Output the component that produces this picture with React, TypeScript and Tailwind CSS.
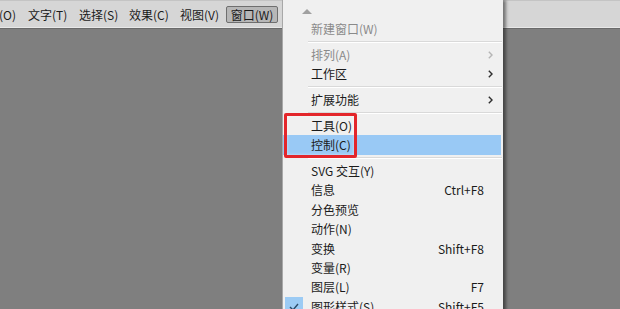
import React from "react";

type Item =
  | { type: "sep" }
  | {
      type: "item";
      label: string;
      disabled?: boolean;
      sub?: boolean;
      shortcut?: string;
      active?: boolean;
      checked?: boolean;
    };

const items: Item[] = [
  { type: "item", label: "新建窗口(W)", disabled: true },
  { type: "sep" },
  { type: "item", label: "排列(A)", disabled: true, sub: true },
  { type: "item", label: "工作区", sub: true },
  { type: "sep" },
  { type: "item", label: "扩展功能", sub: true },
  { type: "sep" },
  { type: "item", label: "工具(O)" },
  { type: "item", label: "控制(C)", active: true },
  { type: "sep" },
  { type: "item", label: "SVG 交互(Y)" },
  { type: "item", label: "信息", shortcut: "Ctrl+F8" },
  { type: "item", label: "分色预览" },
  { type: "item", label: "动作(N)" },
  { type: "item", label: "变换", shortcut: "Shift+F8" },
  { type: "item", label: "变量(R)" },
  { type: "item", label: "图层(L)", shortcut: "F7" },
  { type: "item", label: "图形样式(S)", shortcut: "Shift+F5", checked: true },
];

function Chevron({ disabled }: { disabled?: boolean }) {
  return (
    <svg width="5" height="8" viewBox="0 0 5 8" className="absolute right-[8px] top-1/2 -translate-y-1/2">
      <path d="M0.8 0.8 L4 4 L0.8 7.2" fill="none" stroke={disabled ? "#b5b5b5" : "#2e2e2e"} strokeWidth="1.4" />
    </svg>
  );
}

export default function App() {
  return (
    <div className="relative w-[620px] h-[309px] overflow-hidden bg-[#7f7f7f] font-['Noto_Sans_CJK_SC','Noto_Sans',sans-serif] text-[12px] text-[#1b1b1b]">
      {/* menu bar */}
      <div className="h-[28px] bg-[#d6d6d6] border-t border-[#c4c4c4] border-b border-b-[#e8e8e8] flex items-center pt-[1px] leading-none">
        <span className="w-[29px] -ml-[1px] shrink-0">(O)</span>
        <span className="w-[51px] shrink-0">文字(T)</span>
        <span className="w-[50px] shrink-0">选择(S)</span>
        <span className="w-[51px] shrink-0">效果(C)</span>
        <span className="w-[46px] shrink-0">视图(V)</span>
        <span className="w-[52px] h-[17px] shrink-0 flex items-center justify-center bg-[#b7b7b7] border border-[#6f6f6f] rounded-[2px]">
          窗口(W)
        </span>
      </div>
      <div className="h-[1px] bg-[#6a6a6a]" />

      {/* dropdown menu */}
      <div className="absolute left-[282px] top-0 w-[221px] h-[330px] bg-[#f0f0f0] border-l border-[#a8a8a8] shadow-[3px_0_3px_rgba(0,0,0,0.45)]">
        <div className="h-[19px] relative">
          <svg width="10" height="5" viewBox="0 0 10 5" className="absolute left-[19px] top-[9px]">
            <path d="M0 5 L5 0 L10 5 Z" fill="#a0a0a0" />
          </svg>
        </div>
        {items.map((it, i) =>
          it.type === "sep" ? (
            <div key={i} className="h-[6.5px] flex items-center pl-[25px] pr-[1px]">
              <div className="h-[1px] w-full bg-[#d9d9d9] border-b border-white box-content" />
            </div>
          ) : (
            <div
              key={i}
              className={
                "relative h-[19.4px] flex items-center pl-[28px] pr-[17px] mr-[2px] leading-none " +
                (it.active ? "bg-[#99c9f5] " : "") +
                (it.disabled ? "text-[#8a8a8a]" : "text-[#1b1b1b]")
              }
            >
              {it.checked && (
                <div className="absolute left-[2px] top-0 w-[18px] h-[19.4px] bg-[#9ccbf4] flex items-center justify-center">
                  <svg width="10" height="8" viewBox="0 0 10 8">
                    <path d="M1 4 L4 7 L9 1" fill="none" stroke="#2b4a66" strokeWidth="1.4" />
                  </svg>
                </div>
              )}
              <span className="flex-1">{it.label}</span>
              {it.shortcut && <span>{it.shortcut}</span>}
              {it.sub && <Chevron disabled={it.disabled} />}
            </div>
          )
        )}
      </div>

      {/* red highlight box */}
      <div className="absolute left-[284px] top-[113px] w-[73px] h-[45px] border-[3px] border-[#e3262b] rounded-[2px] shadow-[inset_0_0_3px_rgba(255,255,255,0.6)]" />
    </div>
  );
}
